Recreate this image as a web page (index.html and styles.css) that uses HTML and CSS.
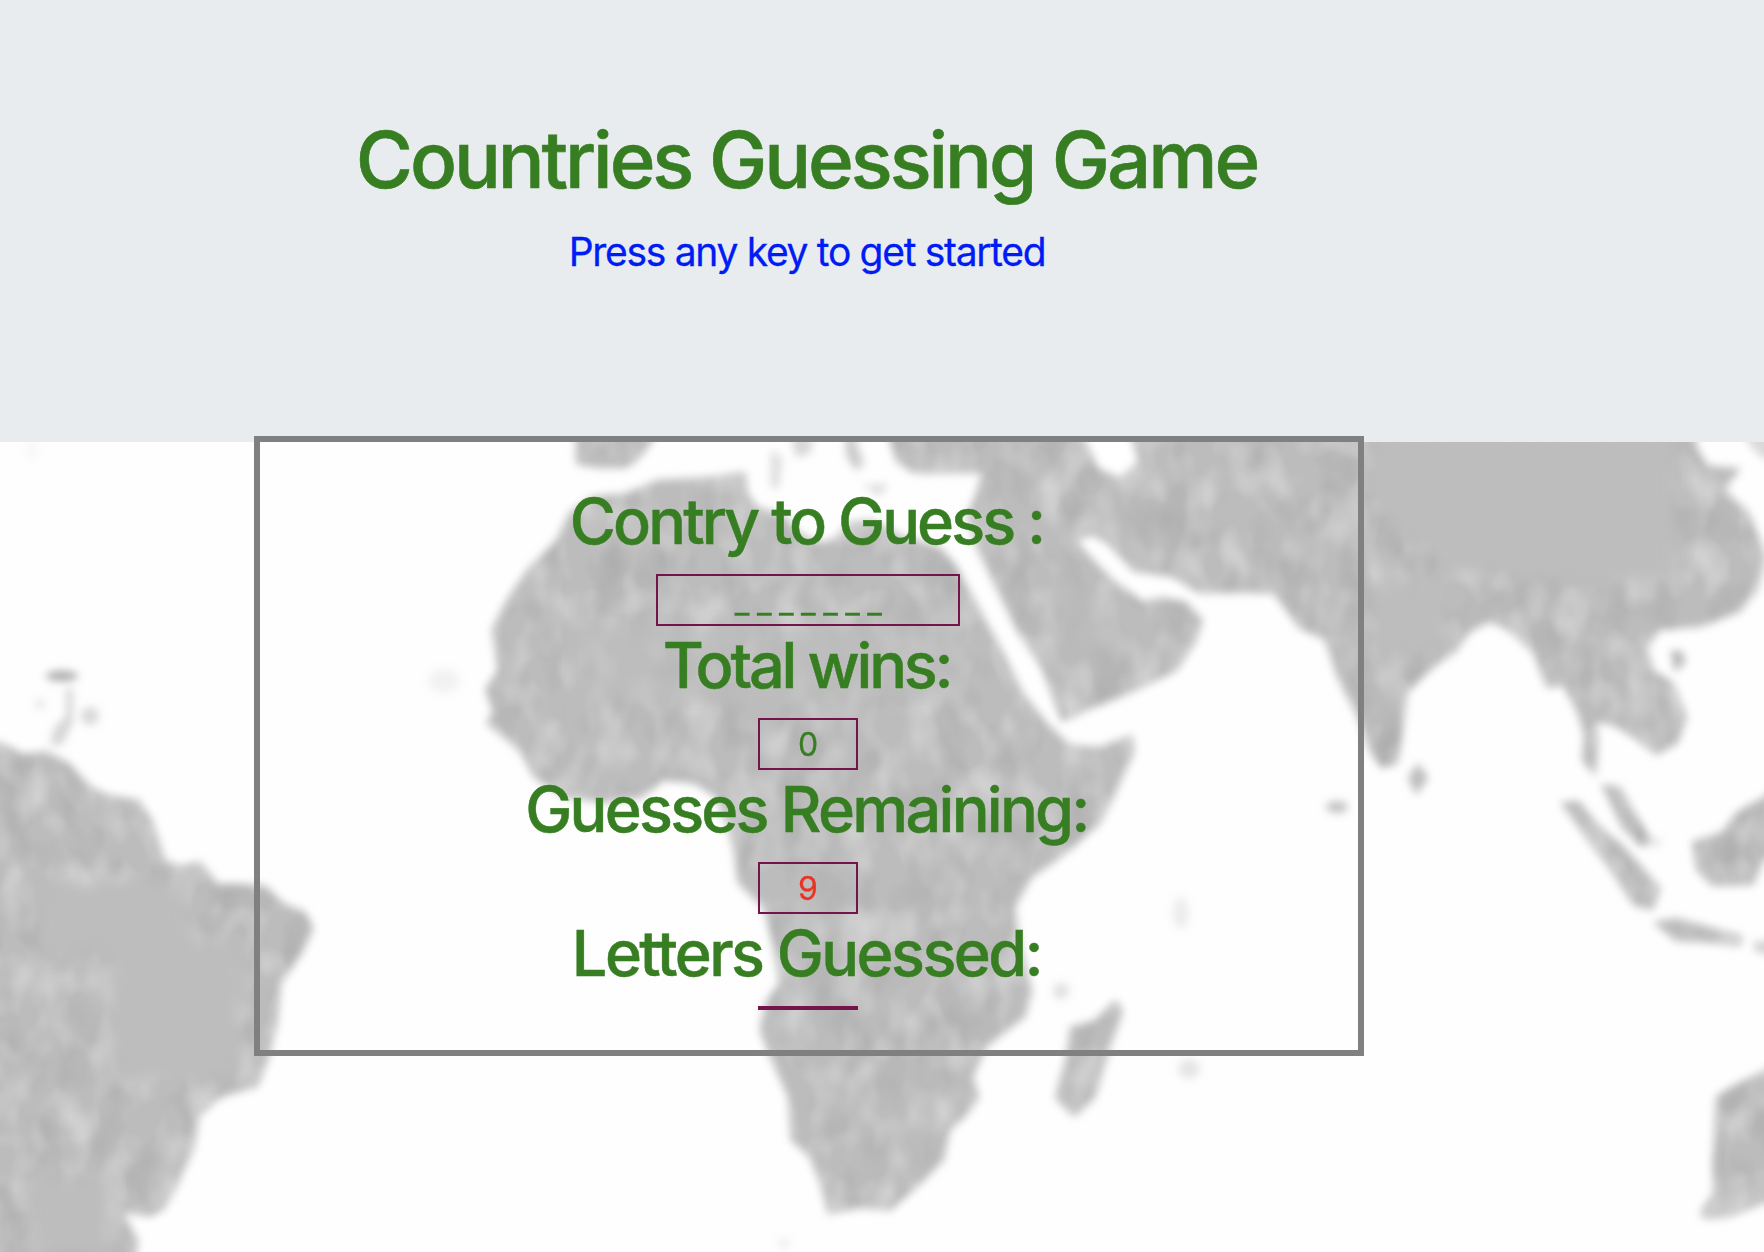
FILE: index.html
```html
<!DOCTYPE html>
<html lang="en">
<head>
<meta charset="utf-8">
<title>Countries Guessing Game</title>
<link rel="stylesheet" href="styles.css">
</head>
<body>
<header class="hero">
  <h1 class="hero-title">Countries Guessing Game</h1>
  <p class="hero-lead">Press any key to get started</p>
</header>
<main class="stage">
  <svg class="map" viewBox="0 442 1764 810" width="1764" height="810" aria-hidden="true">
    <defs>
      <filter id="terrain" filterUnits="userSpaceOnUse" x="-40" y="400" width="1850" height="900" color-interpolation-filters="sRGB">
        <feGaussianBlur in="SourceGraphic" stdDeviation="4.5" result="land"/>
        <feTurbulence type="fractalNoise" baseFrequency="0.032 0.022" numOctaves="2" seed="7" result="noise"/>
        <feColorMatrix in="noise" type="matrix" values="0 0 0 0 1  0 0 0 0 1  0 0 0 0 1  0.8 0 0 0 -0.34" result="light"/>
        <feColorMatrix in="noise" type="matrix" values="0 0 0 0 0.5  0 0 0 0 0.5  0 0 0 0 0.5  0 0.45 0 0 -0.2" result="dark"/>
        <feMerge result="relief"><feMergeNode in="light"/><feMergeNode in="dark"/></feMerge>
        <feComposite in="relief" in2="land" operator="in" result="shade"/>
        <feMerge><feMergeNode in="land"/><feMergeNode in="shade"/></feMerge>
      </filter>
      <filter id="soft" filterUnits="userSpaceOnUse" x="-40" y="400" width="1850" height="900"><feGaussianBlur stdDeviation="4.5"/></filter>
      <filter id="wide" filterUnits="userSpaceOnUse" x="-40" y="400" width="1850" height="900"><feGaussianBlur stdDeviation="8"/></filter>
    </defs>
    <g fill="#bcbcbc" filter="url(#terrain)">
      <!-- South America -->
      <path d="M-30 735L0 743L23 754L46 751L69 763L92 788L111 796L138 800L152 820L160 845L165 860L180 866L200 862L218 884L264 885L283 903L305 912L313 928L302 953L281 983L277 1023L268 1060L257 1086L220 1098L199 1115L193 1150L178 1183L163 1210L150 1216L123 1213L138 1240L132 1290H-30Z"/>
      <!-- Africa -->
      <path d="M592 497L622 494L640 488L657 480L714 477L745 472L747 493L758 508L783 514L800 534L822 543L836 538L848 523L870 520L900 535L940 547L956 566L973 597L1000 647L1023 693L1047 723L1070 745L1100 747L1132 735L1134 750L1117 790L1100 823L1073 847L1050 865L1032 877L1015 907L1019 940L1032 990L1025 1017L986 1047L973 1077L979 1097L966 1115L950 1130L944 1160L921 1183L891 1210L860 1208L828 1214L820 1183L810 1157L791 1140L788 1097L772 1060L760 1030L765 1003L780 983L772 940L765 910L738 883L733 845L718 798L695 783L664 780L641 797L603 803L565 797L534 777L519 750L486 723L493 712L485 690L498 670L492 630L507 600L527 570L557 540L569 513Z"/>
      <!-- Asia with Arabia, India and Indochina -->
      <path d="M892 400L890 440L897 462L913 473L982 473L975 497L967 515L978 550L997 590L1017 630L1043 670L1062 722L1087 710L1130 693L1177 670L1195 643L1203 620L1186 602L1163 597L1143 602L1113 580L1087 553L1076 540L1092 535L1107 543L1133 571L1173 577L1198 593L1273 593L1300 629L1325 640L1337 677L1357 715L1370 752L1381 768L1397 764L1403 730L1407 693L1430 670L1457 650L1470 632L1490 622L1510 631L1533 653L1547 688L1563 685L1577 712L1584 735L1582 760L1596 776L1598 745L1596 722L1613 725L1637 740L1657 755L1677 743L1687 717L1673 683L1653 670L1647 647L1660 630L1700 627L1740 612L1757 590L1766 557L1749 513L1725 490L1740 468L1708 466L1697 448L1690 400Z"/>
      <!-- Iberia, Italy, Greece -->
      <path d="M576 400V464L597 468L625 468L637 460L653 440V400Z"/>
      <path d="M1738 400L1750 446L1764 458H1800V400Z" fill-opacity=".6"/>
      <path d="M846 400L846 455L856 471L864 464L856 440V400Z" fill-opacity=".75"/>
      <path d="M771 450L782 458L778 490L771 485ZM792 436H812V452L796 458ZM862 485L888 484L880 496Z" fill-opacity=".5"/>
      <!-- Islands -->
      <path d="M1116 1000L1123 1012L1110 1047L1095 1097L1074 1117L1055 1098L1066 1060L1070 1027L1094 1021Z"/>
      <path d="M1418 763L1428 778L1416 795L1408 778Z"/>
      <path d="M1561 803L1578 801L1600 827L1622 845L1642 867L1660 888L1653 910L1634 906L1612 872L1584 835Z"/>
      <path d="M1601 784L1620 787L1636 815L1650 838L1642 846L1622 828Z"/>
      <path d="M1653 922L1677 918L1712 928L1742 936L1740 946L1715 943L1675 941Z"/>
      <path d="M1753 942L1790 940V956L1756 952Z" fill-opacity=".7"/>
      <path d="M1790 778L1764 797L1738 812L1722 832L1692 842L1697 870L1712 886L1753 885L1764 860L1790 850Z"/>
      <path d="M1671 651L1682 651L1685 662L1675 672Z"/>
      <!-- Australia -->
      <path d="M1800 1050L1764 1071L1738 1083L1716 1096L1713 1163L1714 1192L1700 1213L1706 1219L1730 1216L1764 1203H1800Z"/>
    </g>
    <!-- Lakes and inland seas -->
    <path d="M1080 430H1130L1138 462L1120 478L1098 468Z" fill="#fff" filter="url(#soft)"/>
    <!-- Even interiors -->
    <g fill="#bdbdbd" filter="url(#wide)">
      <path d="M1372 430H1675V580H1610L1450 570L1375 500Z"/>
      <path d="M1372 585H1450L1440 650H1380Z"/>
      <path d="M40 885H185L190 950H240L238 1080H115L110 950H40Z"/>
      <path d="M30 1180H110L105 1252H30Z"/>
      <path d="M570 620H960V700H570Z" opacity=".55"/>
      <path d="M1040 570L1100 590L1130 660H1070Z" opacity=".6"/>
    </g>
    <!-- Small islands -->
    <g fill="#9a9a9a" filter="url(#soft)">
      <ellipse cx="62" cy="676" rx="16" ry="5" opacity=".85"/>
      <path d="M66 688H73V722L62 745H50L54 728L66 716Z" opacity=".4"/>
      <ellipse cx="90" cy="716" rx="9" ry="9" opacity=".38"/>
      <ellipse cx="40" cy="704" rx="5" ry="5" opacity=".25"/>
      <ellipse cx="1337" cy="807" rx="11" ry="6" opacity=".6"/>
      <ellipse cx="444" cy="681" rx="16" ry="12" opacity=".12"/>
      <ellipse cx="1181" cy="913" rx="8" ry="16" opacity=".18"/>
      <ellipse cx="1189" cy="1069" rx="11" ry="10" opacity=".25"/>
      <ellipse cx="1061" cy="991" rx="8" ry="8" opacity=".3"/>
      <ellipse cx="32" cy="450" rx="4" ry="10" opacity=".1"/>
      <ellipse cx="1648" cy="842" rx="14" ry="4" opacity=".3"/>
      <ellipse cx="784" cy="1243" rx="5" ry="5" opacity=".2"/>
    </g>
  </svg>
  <section class="board">
    <h2 class="label label-country">Contry to Guess :</h2>
    <div class="value value-word">_ _ _ _ _ _ _</div>
    <h2 class="label label-wins">Total wins:</h2>
    <div class="value">0</div>
    <h2 class="label label-left">Guesses Remaining:</h2>
    <div class="value value-left">9</div>
    <h2 class="label label-letters">Letters Guessed:</h2>
    <div class="value"></div>
  </section>
</main>
</body>
</html>
```
FILE: styles.css
```css
* { box-sizing: border-box; }

body {
  margin: 0;
  height: 1252px;
  overflow: hidden;
  background: #fefefe;
  color: #377e22;
  font-family: Inter, "Liberation Sans", sans-serif;
  display: flex;
  flex-direction: column;
}

.hero {
  flex: none;
  height: 442px;
  padding: 112px 150px 0 0;
  background: #e9ecef;
  text-align: center;
}

.hero-title {
  margin: 0 0 14px;
  padding-right: 1px;
  font-size: 78px;
  font-weight: 500;
  line-height: 96px;
  letter-spacing: -3.1px;
  -webkit-text-stroke: 0.6px;
}

.hero-lead {
  margin: 0;
  color: #001cf5;
  font-size: 39px;
  line-height: 60px;
  letter-spacing: -1.31px;
  -webkit-text-stroke: 0.3px;
}

.stage {
  position: relative;
  flex: 1;
}

.map {
  position: absolute;
  inset: 0;
  display: block;
}

.board {
  position: relative;
  display: flex;
  flex-direction: column;
  align-items: center;
  width: 1110px;
  height: 620px;
  margin: -6px 0 0 254px;
  padding: 40px 2px 40px 0;
  border: 6px solid #808080;
}

.label {
  margin: 0 0 15px;
  padding: 1px 3px 0 0;
  font-size: 63px;
  font-weight: 500;
  line-height: 76px;
  white-space: nowrap;
  -webkit-text-stroke: 0.5px;
}

.label-country { letter-spacing: -2.95px; }
.label-wins { letter-spacing: -3.25px; }
.label-left { letter-spacing: -2.75px; }
.label-letters { letter-spacing: -2.55px; }

.value {
  width: 100px;
  border: 2px solid #75144c;
  font-size: 32px;
  line-height: 50px;
  text-align: center;
  max-height: 52px;
  -webkit-text-stroke: 0.3px;
}

.value-word {
  width: 304px;
  line-height: 52px;
  letter-spacing: -0.75px;
}

.value-left { color: #ea3323; }
```
